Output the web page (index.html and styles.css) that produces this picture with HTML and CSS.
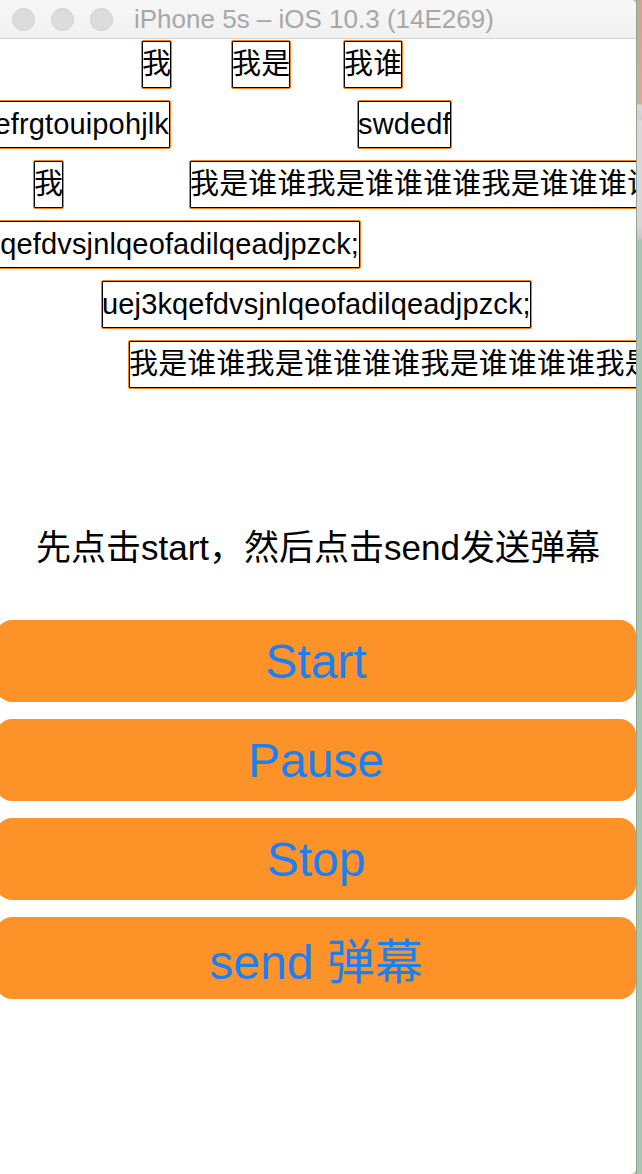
FILE: index.html
```html
<!DOCTYPE html>
<html lang="zh-CN">
<head>
<meta charset="utf-8">
<title>iPhone 5s – iOS 10.3 (14E269)</title>
<link rel="stylesheet" href="styles.css">
</head>
<body>
<div class="screen">
  <div class="window">
    <header class="titlebar">
      <div class="lights">
        <span class="light"></span>
        <span class="light"></span>
        <span class="light"></span>
      </div>
      <div class="title">iPhone 5s – iOS 10.3 (14E269)</div>
    </header>
    <main class="app">
      <div class="stage">
        <div class="dm d1">我</div>
        <div class="dm d2">我是</div>
        <div class="dm d3">我谁</div>
        <div class="dm d4 cut">efrgtouipohjlk</div>
        <div class="dm d5">swdedf</div>
        <div class="dm d6">我</div>
        <div class="dm d7">我是谁谁我是谁谁谁谁我是谁谁谁谁我是谁谁谁谁</div>
        <div class="dm d8 cut">qefdvsjnlqeofadilqeadjpzck;</div>
        <div class="dm d9">uej3kqefdvsjnlqeofadilqeadjpzck;</div>
        <div class="dm d10">我是谁谁我是谁谁谁谁我是谁谁谁谁我是谁谁谁谁</div>
      </div>
      <p class="hint">先点击start，然后点击send发送弹幕</p>
      <div class="buttons">
        <button class="btn">Start</button>
        <button class="btn">Pause</button>
        <button class="btn">Stop</button>
        <button class="btn">send 弹幕</button>
      </div>
    </main>
  </div>
  <div class="desktop"></div>
</div>
</body>
</html>
```

FILE: styles.css
```css
html, body {
  margin: 0;
  padding: 0;
  height: 100%;
}
body {
  font-family: "Liberation Sans", "Noto Sans CJK SC", sans-serif;
  overflow: hidden;
}
.screen {
  display: flex;
  width: 642px;
  height: 1174px;
  background: #aac6b2;
}
.window {
  width: 636px;
  height: 1174px;
  display: flex;
  flex-direction: column;
  background: #ffffff;
  border-top-right-radius: 5px;
  border-bottom-right-radius: 5px;
  overflow: hidden;
  flex: none;
}
.desktop {
  flex: 1;
  border-left: 1px solid #8fa595;
  background: linear-gradient(to bottom,
    #c6a592 0, #cfae9c 104px,
    #d9d9d9 105px, #cfcfcf 120px, #dadada 121px, #d6d6d6 225px,
    #c8c8c8 238px,
    #aac6b2 240px, #aac6b2 100%);
}
.titlebar {
  height: 38px;
  border-bottom: 1px solid #d3d3d3;
  background: linear-gradient(to bottom, #f7f7f7, #f1f1f1);
  display: flex;
  align-items: center;
  flex: none;
}
.lights {
  display: flex;
  gap: 16px;
  padding-left: 12px;
}
.light {
  width: 21px;
  height: 21px;
  border-radius: 50%;
  background: #dcdcdc;
  border: 1px solid #d0d0d0;
}
.title {
  margin-left: 21px;
  font-size: 26px;
  color: #a7a7a7;
  white-space: nowrap;
  line-height: 38px;
}
.app {
  display: flex;
  flex-direction: column;
}
.stage {
  position: relative;
  height: 470px;
  overflow: hidden;
  flex: none;
}
.dm {
  position: absolute;
  box-sizing: border-box;
  height: 49px;
  line-height: 47px;
  font-size: 29px;
  letter-spacing: 0.15px;
  color: #000;
  white-space: nowrap;
  border: 1px solid #f07d1e;
  box-shadow: inset 0 0 0 1px #000;
  border-radius: 2px;
  padding: 0;
}
.dm.cut {
  text-align: right;
  padding-right: 1px;
}
.d1 { left: 141px; top: 1px; }
.d2 { left: 231px; top: 1px; }
.d3 { left: 343px; top: 1px; }
.d4 { left: -40px; width: 211px; top: 61px; }
.d5 { left: 357px; top: 61px; }
.d6 { left: 33px; top: 121px; }
.d7 { left: 189px; top: 121px; }
.d8 { left: -40px; width: 401px; top: 181px; }
.d9 { left: 101px; top: 241px; }
.d10 { left: 128px; top: 301px; }
.hint {
  margin: 0;
  height: 78px;
  line-height: 78px;
  text-align: center;
  font-size: 35px;
  color: #000;
  white-space: nowrap;
}
.buttons {
  margin-top: 33px;
  display: flex;
  flex-direction: column;
  gap: 17px;
  margin-left: -4px;
  width: 640px;
}
.btn {
  height: 82px;
  border: none;
  border-radius: 16px;
  background: #fc9228;
  color: #1c7ff2;
  font-family: "Liberation Sans", "Noto Sans CJK SC", sans-serif;
  font-size: 48px;
  padding: 0;
  margin: 0;
}
```
